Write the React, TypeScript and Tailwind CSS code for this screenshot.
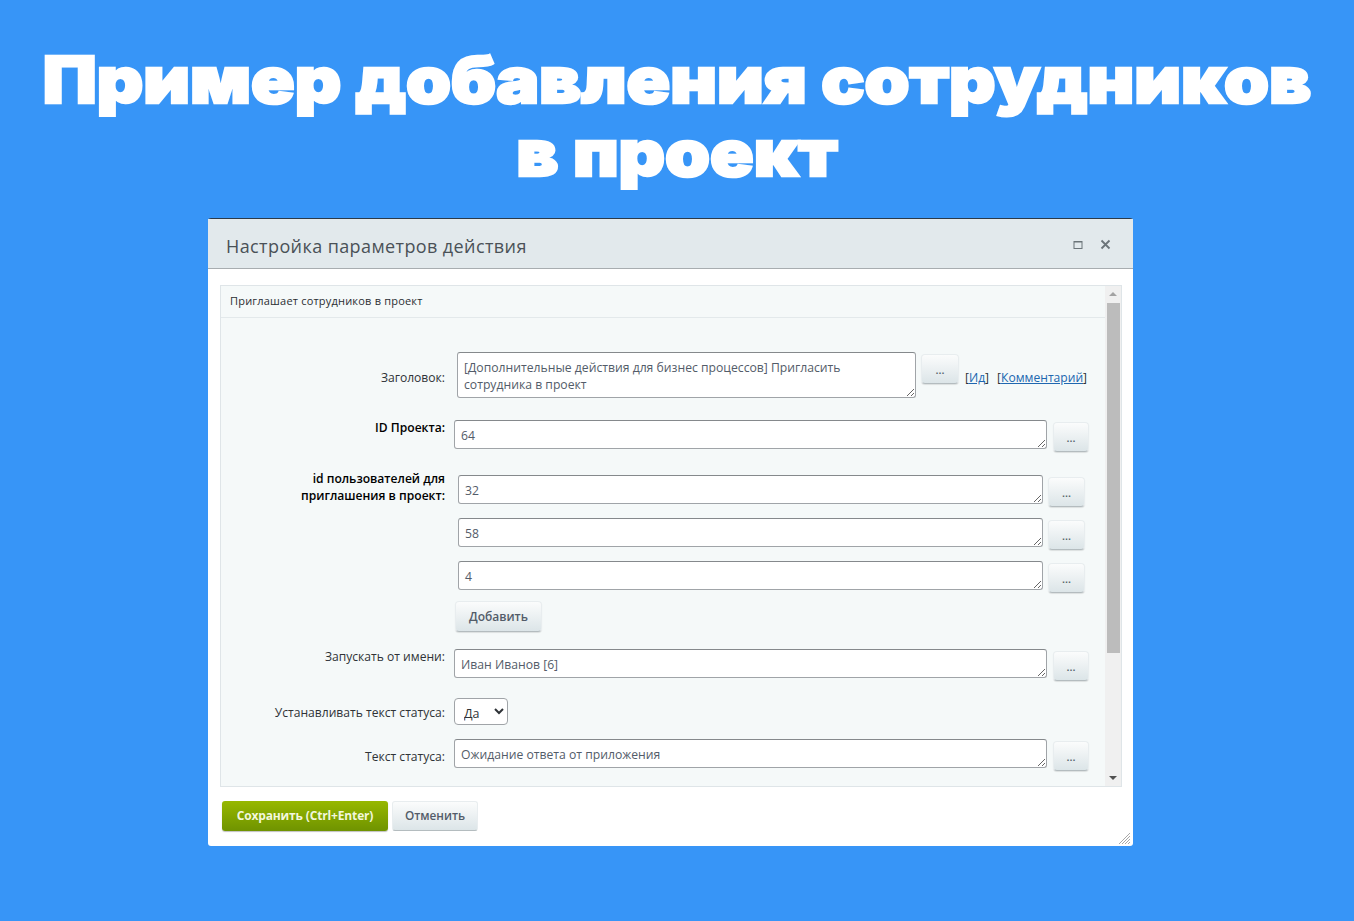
import React from 'react';

const font = 'font-["Open_Sans",sans-serif]';

function DotsButton({ className = '' }: { className?: string }) {
  return (
    <button className={`h-[30px] mt-[2px] shrink-0 rounded-[4px] bg-gradient-to-b from-[#fbfcfc] to-[#dce5e8] border border-[#e8edef] border-b-[#b4bcbf] shadow-[0_1px_1px_rgba(0,0,0,0.1)] text-[11px] font-semibold leading-none text-[#535c69] ${className}`}>
      ...
    </button>
  );
}

function Field({ value, w, h = 'h-[29px]', rows = 1 }: { value: string; w: string; h?: string; rows?: number }) {
  return (
    <textarea
      readOnly
      rows={rows}
      defaultValue={value}
      className={`${w} ${h} shrink-0 block resize rounded-[3px] border border-[#a0a4a8] border-t-[#85898c] bg-white px-[6px] pt-[6px] pb-0 text-[12.2px] leading-[17px] text-[#535c69] outline-none`}
    />
  );
}

function Label({ children, bold, className = '' }: { children: React.ReactNode; bold?: boolean; className?: string }) {
  return (
    <div className={`w-[224px] shrink-0 text-right text-[12.1px] leading-[17px] text-[#2f3337] ${bold ? 'font-semibold text-black' : ''} ${className}`}>
      {children}
    </div>
  );
}

export default function App() {
  return (
    <div className={`h-[921px] w-[1354px] overflow-hidden bg-[#3795f7] ${font}`}>
      <h1 className={`pt-[43px] scale-x-[1.125] text-center font-["Inter",sans-serif] text-[64px] leading-[73px] font-black text-white [-webkit-text-stroke:2.5px_white]`}>
        Пример добавления сотрудников
        <br />в проект
      </h1>

      {/* Dialog */}
      <div className="relative mt-[29px] ml-[208px] h-[628px] w-[925px] rounded-[3px] border-t border-[#2a3a4a] bg-white">
        <div className="flex h-[50px] items-center justify-between border-b border-[#a8adb0] bg-[#e2e9ec] pl-[18px] pr-[22px]">
          <span className="mt-[5px] text-[18px] tracking-[0.4px] text-[#4a5157]">Настройка параметров действия</span>
          <div className="mt-[2px] flex items-center gap-[17px]">
            <svg width="10" height="10" viewBox="0 0 10 10" fill="none" stroke="#6b7479" strokeWidth="1">
              <rect x="1" y="1.5" width="8" height="7" />
              <path d="M1 2h8" />
            </svg>
            <svg width="11" height="11" viewBox="0 0 11 11" fill="none" stroke="#6b7479" strokeWidth="1.8">
              <path d="M1.5 1.5l8 8M9.5 1.5l-8 8" />
            </svg>
          </div>
        </div>

        {/* Panel */}
        <div className="ml-[12px] mr-[11px] mt-[16px] flex h-[502px] overflow-hidden border border-[#dfe5e8] bg-[#f5f9f9]">
          <div className="flex-1">
            <div className="flex h-[32px] items-center border-b border-[#e3e9eb] pl-[9px] text-[11px] tracking-[0.2px] text-[#2b2f33]">
              Приглашает сотрудников в проект
            </div>

            <div className="mt-[34px] flex items-center">
              <Label className="mt-[4px]">Заголовок:</Label>
              <div className="ml-[12px] flex items-start">
                <Field
                  w="w-[459px]"
                  h="h-[46px]"
                  rows={2}
                  value="[Дополнительные действия для бизнес процессов] Пригласить сотрудника в проект"
                />
                <DotsButton className="ml-[5px] w-[38px]" />
              </div>
              <div className="ml-[6px] mt-[7px] whitespace-nowrap text-[12.1px] text-[#2f3337]">
                [<span className="text-[#2067b0] underline">Ид</span>]<span className="ml-[8px]">[</span>
                <span className="text-[#2067b0] underline">Комментарий</span>]
              </div>
            </div>

            <div className="mt-[22px] flex items-start">
              <Label bold className="-mt-px">ID Проекта:</Label>
              <div className="ml-[9px] flex items-start">
                <Field w="w-[593px]" value="64" />
                <DotsButton className="ml-[6px] w-[36px]" />
              </div>
            </div>

            <div className="mt-[23px] flex items-start">
              <Label bold className="-mt-[5px]">
                id пользователей для
                <br />
                приглашения в проект:
              </Label>
              <div className="ml-[13px] flex flex-col gap-[11px]">
                {['32', '58', '4'].map((v) => (
                  <div key={v} className="flex items-start">
                    <Field w="w-[585px]" value={v} />
                    <DotsButton className="ml-[5px] w-[37px]" />
                  </div>
                ))}
                <button className="-ml-[3px] -mt-[3px] h-[31px] w-[87px] rounded-[4px] border border-[#e8edef] border-b-[#b4bcbf] bg-gradient-to-b from-[#fbfcfc] to-[#dce5e8] text-[12px] font-semibold text-[#535c69] shadow-[0_1px_1px_rgba(0,0,0,0.1)]">
                  Добавить
                </button>
              </div>
            </div>

            <div className="mt-[17px] flex items-start">
              <Label className="-mt-px">Запускать от имени:</Label>
              <div className="ml-[9px] flex items-start">
                <Field w="w-[593px]" value="Иван Иванов [6]" />
                <DotsButton className="ml-[6px] w-[36px]" />
              </div>
            </div>

            <div className="mt-[17px] flex items-center">
              <Label className="mt-[1px]">Устанавливать текст статуса:</Label>
              <select className="ml-[9px] h-[27px] w-[54px] rounded-[4px] border border-[#a0a4a8] bg-white pl-[5px] pt-[3px] text-[12.5px] text-[#2f3337]">
                <option>Да</option>
              </select>
            </div>

            <div className="mt-[14px] flex items-center">
              <Label className="mt-[3px]">Текст статуса:</Label>
              <div className="ml-[9px] flex items-start">
                <Field w="w-[593px]" value="Ожидание ответа от приложения" />
                <DotsButton className="ml-[6px] w-[36px]" />
              </div>
            </div>
          </div>

          {/* Scrollbar */}
          <div className="flex w-[16px] shrink-0 flex-col items-center bg-[#f0f0f0]">
            <svg width="16" height="17" viewBox="0 0 16 17" className="shrink-0">
              <path d="M8 6l4 4H4z" fill="#a3a3a3" />
            </svg>
            <div className="h-[350px] w-[13px] bg-[#bcbcbc]" />
            <div className="flex-1" />
            <svg width="16" height="17" viewBox="0 0 16 17" className="shrink-0">
              <path d="M8 11l4-4H4z" fill="#505050" />
            </svg>
          </div>
        </div>

        {/* Footer */}
        <div className="mt-[14px] flex items-start gap-[4px] pl-[14px]">
          <button className="h-[30px] w-[166px] rounded-[3px] bg-gradient-to-b from-[#97b800] to-[#6f9300] text-[12px] font-bold tracking-[-0.15px] text-[#f2f7dc] shadow-[0_1px_1px_rgba(0,0,0,0.25)]">
            Сохранить (Ctrl+Enter)
          </button>
          <button className="h-[30px] w-[86px] rounded-[3px] border border-[#e8edef] border-b-[#b4bcbf] bg-gradient-to-b from-[#fbfcfc] to-[#dce5e8] text-[11.8px] font-semibold text-[#535c69]">
            Отменить
          </button>
        </div>

        <svg width="13" height="13" viewBox="0 0 13 13" className="absolute bottom-[1px] right-[2px]" stroke="#a8a8a8" strokeWidth="1">
          <path d="M1 12L12 1M4 12l8-8M7 12l5-5M10 12l2-2" />
        </svg>
      </div>
    </div>
  );
}
